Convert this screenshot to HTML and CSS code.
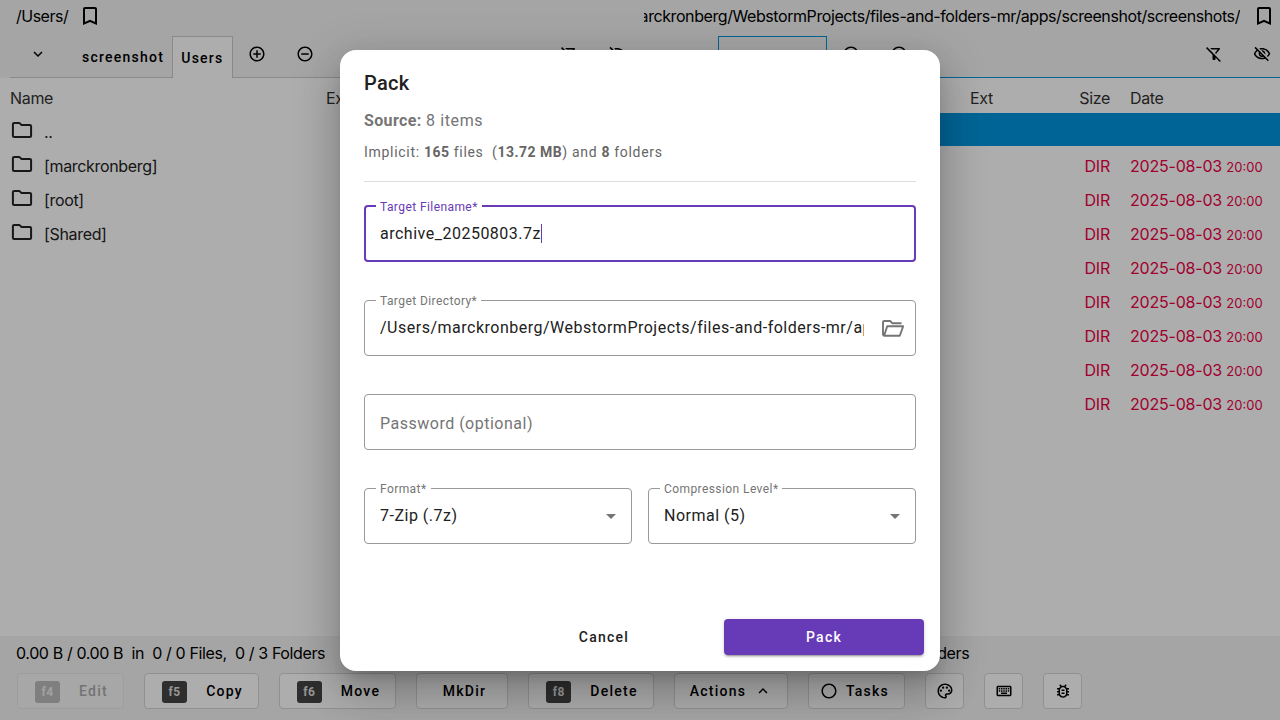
FILE: index.html
```
<!DOCTYPE html>
<html lang="en">
<head>
<meta charset="utf-8">
<title>Pack</title>
<link rel="stylesheet" href="styles.css">
</head>
<body>
<svg class="defs" aria-hidden="true">
  <symbol id="bookmark" viewBox="0 0 24 24"><path d="M17 3H7c-1.1 0-1.99.9-1.99 2L5 21l7-3 7 3V5c0-1.1-.9-2-2-2zm0 15l-5-2.18L7 18V5h10v13z"/></symbol>
  <symbol id="add" viewBox="0 0 24 24"><path d="M13 7h-2v4H7v2h4v4h2v-4h4v-2h-4V7zm-1-5C6.48 2 2 6.48 2 12s4.48 10 10 10 10-4.48 10-10S17.52 2 12 2zm0 18c-4.41 0-8-3.59-8-8s3.59-8 8-8 8 3.59 8 8-3.59 8-8 8z"/></symbol>
  <symbol id="remove" viewBox="0 0 24 24"><path d="M7 11v2h10v-2H7zm5-9C6.48 2 2 6.48 2 12s4.48 10 10 10 10-4.48 10-10S17.52 2 12 2zm0 18c-4.41 0-8-3.59-8-8s3.59-8 8-8 8 3.59 8 8-3.59 8-8 8z"/></symbol>
  <symbol id="circle" viewBox="0 0 24 24"><path d="M12 2C6.47 2 2 6.47 2 12s4.47 10 10 10 10-4.47 10-10S17.53 2 12 2zm0 18c-4.42 0-8-3.58-8-8s3.58-8 8-8 8 3.58 8 8-3.58 8-8 8z"/></symbol>
  <symbol id="more" viewBox="0 0 24 24"><path d="M16.59 8.59L12 13.17 7.41 8.59 6 10l6 6 6-6z"/></symbol>
  <symbol id="less" viewBox="0 0 24 24"><path d="M12 8l-6 6 1.41 1.41L12 10.83l4.59 4.58L18 14z"/></symbol>
  <symbol id="filter-off" viewBox="0 0 24 24"><path d="M16.95 6l-3.57 4.55 1.43 1.43c1.03-1.31 4.98-6.37 4.98-6.37C20.3 4.95 19.83 4 19 4H6.83l2 2h8.12zM2.81 2.81L1.39 4.22 10 13v6c0 .55.45 1 1 1h2c.55 0 1-.45 1-1v-2.17l5.78 5.78 1.41-1.41L2.81 2.81z"/></symbol>
  <symbol id="eye-off" viewBox="0 0 24 24"><path d="M12 6c3.79 0 7.17 2.13 8.82 5.5-.59 1.22-1.42 2.27-2.41 3.12l1.41 1.41c1.39-1.23 2.49-2.77 3.18-4.53C21.27 7.11 17 4 12 4c-1.27 0-2.49.2-3.64.57l1.65 1.65C10.66 6.09 11.32 6 12 6zm-1.07 1.14L13 9.21c.57.25 1.03.71 1.28 1.28l2.07 2.07c.08-.34.14-.7.14-1.07C16.5 9.01 14.48 7 12 7c-.37 0-.72.05-1.07.14zM2.01 3.87l2.68 2.68C3.06 7.83 1.77 9.53 1 11.5 2.73 15.89 7 19 12 19c1.52 0 2.98-.29 4.32-.82l3.42 3.42 1.41-1.41L3.42 2.45 2.01 3.87zm7.5 7.5l2.61 2.61c-.04.01-.08.02-.12.02-1.38 0-2.5-1.12-2.5-2.5 0-.05.01-.08.01-.13zm-3.4-3.4l1.75 1.75c-.23.55-.36 1.15-.36 1.78 0 2.48 2.02 4.5 4.5 4.5.63 0 1.23-.13 1.77-.36l.98.98c-.88.24-1.8.38-2.75.38-3.79 0-7.17-2.13-8.82-5.5.7-1.43 1.72-2.61 2.93-3.53z"/></symbol>
  <symbol id="folder" viewBox="0 0 24 24"><path fill="none" stroke="currentColor" stroke-width="2" stroke-linejoin="round" d="M4.2 4.9H9.3l2 2h8.500q1.300 0 1.300 1.300v9.600q0 1.300-1.300 1.300H4.200q-1.300 0-1.300-1.300V6.200q0-1.300 1.300-1.300z"/></symbol>
  <symbol id="folder-open" viewBox="0 0 24 24"><path fill="none" stroke="currentColor" stroke-width="1.900" stroke-linejoin="round" d="M20.500 7.300H11.500l-2.300-2.300H3.200q-1.200 0-1.200 1.200v12.300q0 1.200 1.200 1.200h15.600L22.200 10.300H6.200L3.200 19.500"/></symbol>
  <symbol id="palette" viewBox="0 0 24 24"><path d="M12 22C6.49 22 2 17.510 2 12S6.490 2 12 2s10 4.040 10 9c0 3.310-2.690 6-6 6h-1.770c-.28 0-.5.220-.5.500 0 .12.050.230.130.330.410.470.640 1.060.640 1.670 0 1.380-1.120 2.500-2.500 2.500zm0-18c-4.410 0-8 3.590-8 8s3.590 8 8 8c.28 0 .5-.22.5-.5 0-.16-.08-.28-.14-.35-.41-.46-.63-1.05-.63-1.650 0-1.380 1.120-2.500 2.500-2.500H16c2.210 0 4-1.790 4-4 0-3.860-3.590-7-8-7z"/><circle cx="6.500" cy="11.500" r="1.500"/><circle cx="9.500" cy="7.500" r="1.500"/><circle cx="14.500" cy="7.500" r="1.500"/><circle cx="17.500" cy="11.500" r="1.500"/></symbol>
  <symbol id="keyboard" viewBox="0 0 24 24"><path d="M20 7v10H4V7h16m0-2H4c-1.100 0-1.990.9-1.990 2L2 17c0 1.100.9 2 2 2h16c1.100 0 2-.9 2-2V7c0-1.100-.9-2-2-2z"/><path d="M11 8h2v2h-2zm0 3h2v2h-2zM8 8h2v2H8zm0 3h2v2H8zm-3 0h2v2H5zm0-3h2v2H5zm3 6h8v2H8zm6-3h2v2h-2zm0-3h2v2h-2zm3 3h2v2h-2zm0-3h2v2h-2z"/></symbol>
  <symbol id="bug" viewBox="0 0 24 24"><path d="M20 8h-2.810c-.45-.78-1.070-1.450-1.820-1.960L17 4.410 15.590 3l-2.170 2.170C12.960 5.060 12.490 5 12 5c-.49 0-.96.06-1.410.17L8.410 3 7 4.410l1.620 1.630C7.880 6.550 7.260 7.220 6.810 8H4v2h2.090c-.05.33-.09.66-.09 1v1H4v2h2v1c0 .34.04.67.09 1H4v2h2.810c1.040 1.790 2.970 3 5.190 3s4.150-1.210 5.190-3H20v-2h-2.090c.05-.33.09-.66.09-1v-1h2v-2h-2v-1c0-.34-.04-.67-.09-1H20V8zm-4 4v3c0 .22-.03.47-.07.7l-.1.65-.37.65c-.72 1.240-2.040 2-3.460 2s-2.740-.77-3.460-2l-.37-.64-.1-.65C8.030 15.480 8 15.230 8 15v-4c0-.23.03-.48.07-.7l.1-.65.37-.65c.3-.52.72-.97 1.210-1.310l.57-.39.74-.18c.31-.08.63-.12.94-.12.32 0 .63.04.95.12l.68.16.61.42c.5.34.91.78 1.210 1.310l.38.65.1.65c.04.22.07.47.07.69v1zm-6 2h4v2h-4zm0-4h4v2h-4z"/></symbol>
</svg>

<div class="app">
  <main class="panes">
    <section class="pane">
      <div class="path"><span class="path-text">/Users/</span><svg class="icon i24"><use href="#bookmark"/></svg></div>
      <div class="tabs">
        <span class="tab-menu"><svg class="icon i18"><use href="#more"/></svg></span>
        <span class="tab">screenshot</span>
        <span class="tab active">Users</span>
        <span class="tool"><svg class="icon i18"><use href="#add"/></svg></span>
        <span class="tool"><svg class="icon i18"><use href="#remove"/></svg></span>
        <span class="spacer"></span>
        <span class="tool"><svg class="icon i18"><use href="#filter-off"/></svg></span>
        <span class="tool last"><svg class="icon i18"><use href="#eye-off"/></svg></span>
      </div>
      <div class="files">
        <div class="row head"><span class="c-name">Name</span><span class="c-ext">Ext</span><span class="c-size">Size</span><span class="c-date">Date</span></div>
        <div class="row"><span class="c-name"><svg class="icon i24"><use href="#folder"/></svg><span>..</span></span></div>
        <div class="row"><span class="c-name"><svg class="icon i24"><use href="#folder"/></svg><span>[marckronberg]</span></span></div>
        <div class="row"><span class="c-name"><svg class="icon i24"><use href="#folder"/></svg><span>[root]</span></span></div>
        <div class="row"><span class="c-name"><svg class="icon i24"><use href="#folder"/></svg><span>[Shared]</span></span></div>
      </div>
    </section>
    <section class="pane right">
      <div class="path end"><span class="path-text clip"><span>arckronberg/WebstormProjects/files-and-folders-mr/apps/screenshot/screenshots/</span></span><svg class="icon i24"><use href="#bookmark"/></svg></div>
      <div class="tabs">
        <span class="tab-menu"><svg class="icon i18"><use href="#more"/></svg></span>
        <span class="tab active wide"></span>
        <span class="tool"><svg class="icon i18"><use href="#add"/></svg></span>
        <span class="tool"><svg class="icon i18"><use href="#remove"/></svg></span>
        <span class="spacer"></span>
        <span class="tool"><svg class="icon i18"><use href="#filter-off"/></svg></span>
        <span class="tool last"><svg class="icon i18"><use href="#eye-off"/></svg></span>
      </div>
      <div class="files">
        <div class="row head"><span class="c-name">Name</span><span class="c-ext">Ext</span><span class="c-size">Size</span><span class="c-date">Date</span></div>
        <div class="row selected"></div>
        <div class="row dir"><span class="c-name"></span><span class="c-size">DIR</span><span class="c-date">2025-08-03 <small>20:00</small></span></div>
        <div class="row dir"><span class="c-name"></span><span class="c-size">DIR</span><span class="c-date">2025-08-03 <small>20:00</small></span></div>
        <div class="row dir"><span class="c-name"></span><span class="c-size">DIR</span><span class="c-date">2025-08-03 <small>20:00</small></span></div>
        <div class="row dir"><span class="c-name"></span><span class="c-size">DIR</span><span class="c-date">2025-08-03 <small>20:00</small></span></div>
        <div class="row dir"><span class="c-name"></span><span class="c-size">DIR</span><span class="c-date">2025-08-03 <small>20:00</small></span></div>
        <div class="row dir"><span class="c-name"></span><span class="c-size">DIR</span><span class="c-date">2025-08-03 <small>20:00</small></span></div>
        <div class="row dir"><span class="c-name"></span><span class="c-size">DIR</span><span class="c-date">2025-08-03 <small>20:00</small></span></div>
        <div class="row dir"><span class="c-name"></span><span class="c-size">DIR</span><span class="c-date">2025-08-03 <small>20:00</small></span></div>
      </div>
    </section>
  </main>
  <footer class="footer">
    <div class="status"><span>0.00 B / 0.00 B&nbsp; in&nbsp; 0 / 0 Files,&nbsp; 0 / 3 Folders</span><span class="status-right">Folders</span></div>
    <div class="actions">
      <button class="btn edit disabled"><kbd>f4</kbd>Edit</button>
      <button class="btn copy"><kbd>f5</kbd>Copy</button>
      <button class="btn move"><kbd>f6</kbd>Move</button>
      <button class="btn mkdir">MkDir</button>
      <button class="btn delete"><kbd>f8</kbd>Delete</button>
      <button class="btn menu">Actions<svg class="icon i18"><use href="#less"/></svg></button>
      <button class="btn tasks"><svg class="icon i18"><use href="#circle"/></svg>Tasks</button>
      <button class="btn square"><svg class="icon i18"><use href="#palette"/></svg></button>
      <button class="btn square"><svg class="icon i18"><use href="#keyboard"/></svg></button>
      <button class="btn square"><svg class="icon i18"><use href="#bug"/></svg></button>
    </div>
  </footer>
</div>

<div class="backdrop">
  <div class="dialog" role="dialog">
    <h2 class="title">Pack</h2>
    <p class="source"><b>Source:</b> 8 items</p>
    <p class="implicit">Implicit: <b>165</b> files&nbsp; (<b>13.72 MB</b>) and <b>8</b> folders</p>
    <fieldset class="field focus"><legend>Target Filename*</legend><span class="value">archive_20250803.7z<i class="caret"></i></span></fieldset>
    <fieldset class="field"><legend>Target Directory*</legend><span class="value cut">/Users/marckronberg/WebstormProjects/files-and-folders-mr/apps</span><svg class="icon i24 open"><use href="#folder-open"/></svg></fieldset>
    <fieldset class="field empty"><span class="value">Password (optional)</span></fieldset>
    <div class="pair">
      <fieldset class="field"><legend>Format*</legend><span class="value">7-Zip (.7z)</span><i class="arrow"></i></fieldset>
      <fieldset class="field"><legend>Compression Level*</legend><span class="value">Normal (5)</span><i class="arrow"></i></fieldset>
    </div>
    <div class="buttons"><button class="cancel">Cancel</button><button class="pack">Pack</button></div>
  </div>
</div>
</body>
</html>
```

FILE: styles.css
```
* { box-sizing: border-box; }
body { margin: 0; width: 1280px; height: 720px; overflow: hidden; font: 16px/24px Inter, "Liberation Sans", sans-serif; color: #000; }
button { font: inherit; color: inherit; margin: 0; padding: 0; border: 0; background: none; }
.defs { display: none; }
.icon { display: block; flex: none; fill: currentColor; }
.i18 { width: 18px; height: 18px; }
.i24 { width: 24px; height: 24px; }

.app { display: flex; flex-direction: column; width: 1280px; height: 720px; background: #f3f3f3; }
.panes { display: flex; height: 636px; }
.pane { width: 635px; display: flex; flex-direction: column; }
.pane.right { width: 645px; padding-left: 9px; }
.path { display: flex; align-items: center; height: 36px; padding: 0 0 4px 16px; gap: 10px; letter-spacing: -0.5px; }
.path.end { padding: 0 4px 4px 0; gap: 12px; letter-spacing: -0.42px; }
.clip { width: 596px; display: flex; justify-content: flex-end; overflow: hidden; white-space: nowrap; }

.tabs { display: flex; height: 42px; margin-left: 10px; border-bottom: 1px solid #ccc; font: 500 14px/20px Roboto, sans-serif; letter-spacing: 1.25px; }
.tab-menu { width: 64px; padding: 9px 0 0 19px; }
.tab { padding: 11px 8px 0; height: 41px; white-space: nowrap; }
.tab.active { height: 42px; background: #fff; border: 1px solid #ccc; border-bottom: 0; }
.tool { width: 48px; padding: 9px 0 0 15px; }
.tool.last { margin-right: -6px; }
.spacer { flex: 1; }
.right .tabs { margin-left: 0; border-color: #0095dd; }
.right .tab.active { background: #f3f3f3; border-color: #0095dd; width: 109px; margin-left: 10px; }

.files { flex: 1; background: #fff; padding-top: 1px; color: #222; letter-spacing: -0.2px; }
.row { display: flex; height: 34px; line-height: 38px; white-space: nowrap; }
.row.head { color: #333; line-height: 39px; letter-spacing: -0.35px; }
.pane .c-name { width: 316px; padding-left: 10px; display: flex; gap: 10px; letter-spacing: -0.33px; }
.c-name .icon { margin-top: 5px; }
.c-ext { width: 80px; padding-left: 10px; }
.c-size { width: 80px; text-align: right; }
.c-date { padding-left: 20px; }
.right .files { margin-left: -9px; padding-left: 9px; }
.right .c-name { width: 316px; }
.right .c-size { width: 70px; }
.right .dir .c-name { width: 396px; }
.row.selected { background: #0095dd; height: 33px; margin-bottom: 1px; }
.row.dir { color: #ee0045; }
.c-date small { font-size: 13px; letter-spacing: 0; }

.footer { height: 84px; }
.status { display: flex; height: 34px; padding: 5px 16px; white-space: pre; letter-spacing: -0.38px; }
.status-right { margin-left: auto; width: 348px; }
.actions { display: flex; gap: 20px; padding: 3px 17px; }
.btn { display: flex; align-items: center; justify-content: center; height: 36px; border: 1px solid #d6d6d6; border-radius: 4px; background: #fff; font: 500 14px/20px Roboto, sans-serif; letter-spacing: 1.25px; }
.btn kbd { width: 25px; height: 22px; margin: 1px 19px 0 0; border-radius: 3px; background: #444; color: #ddd; font: 700 12px/22px Roboto, sans-serif; letter-spacing: .5px; text-align: center; }
.edit { width: 107px; padding-left: 2px; }
.disabled { background: #f7f7f7; border-color: #e8e8e8; color: #aaa; }
.btn.disabled kbd { background: #bbb; color: #eee; }
.copy { width: 115px; padding-left: 2px; }
.move { width: 117px; padding-left: 2px; }
.mkdir { width: 92px; padding-left: 5px; }
.delete { width: 126px; padding-left: 2px; }
.menu { width: 114px; gap: 8px; }
.tasks { width: 97px; gap: 8px; padding-right: 4px; }
.square { width: 39px; }

.backdrop { position: absolute; top: 0; left: 0; width: 1280px; height: 720px; padding: 50px 340px; background: rgba(0,0,0,.32); }
.dialog { width: 600px; height: 621px; padding: 17px 24px 0; border-radius: 16px; background: #fff; color: #212121; font-family: Roboto, sans-serif; box-shadow: 0 11px 15px -7px rgba(0,0,0,.2), 0 24px 38px 3px rgba(0,0,0,.14), 0 9px 46px 8px rgba(0,0,0,.12); }
.title { margin: 0; font-size: 20px; line-height: 32px; font-weight: 500; letter-spacing: .25px; }
.source { margin: 10px 0 9px; line-height: 24px; letter-spacing: .6px; color: #757575; }
.source b { letter-spacing: .35px; }
.implicit { margin: 0 0 16px; height: 40px; border-bottom: 1px solid #ddd; font-size: 14px; line-height: 20px; letter-spacing: .7px; color: #666; }
.implicit b { letter-spacing: .5px; }
.field { display: flex; align-items: center; height: 64px; min-width: 0; margin: 0 0 30px; padding: 0 12px 8px 10px; border: 1px solid #999; border-radius: 4px; letter-spacing: .5px; }
.field legend { margin-left: 1px; padding: 2px 4px 0; font-size: 12px; line-height: 14px; letter-spacing: .42px; color: #757575; }
.value { display: block; flex: 1; padding-left: 5px; white-space: nowrap; line-height: 24px; }
.field.focus { border: 2px solid #673ab7; padding: 0 12px 7px 9px; }
.field.focus legend { color: #673ab7; margin-left: 1px; }
.caret { display: inline-block; width: 1px; height: 19px; background: #673ab7; vertical-align: -4px; }
.cut { overflow: hidden; margin-right: 17px; }
.open { color: #757575; margin-right: -2px; }
.field.empty { height: 56px; margin-top: 38px; padding-bottom: 0; padding-top: 4px; color: #757575; }
.pair { display: grid; grid-template-columns: 268px 268px; gap: 16px; }
.arrow { border: 5px solid transparent; border-top-color: #757575; border-bottom: 0; margin: 2px 3px 0 0; }
.buttons { display: flex; justify-content: flex-end; margin: 45px -8px 0 0; font-size: 14px; font-weight: 500; letter-spacing: 1.25px; }
.cancel { width: 200px; height: 36px; margin-right: 20px; letter-spacing: inherit; }
.pack { width: 200px; height: 36px; border-radius: 4px; background: #673ab7; color: #fff; letter-spacing: inherit; box-shadow: 0 3px 1px -2px rgba(0,0,0,.2), 0 2px 2px rgba(0,0,0,.14), 0 1px 5px rgba(0,0,0,.12); }
```
